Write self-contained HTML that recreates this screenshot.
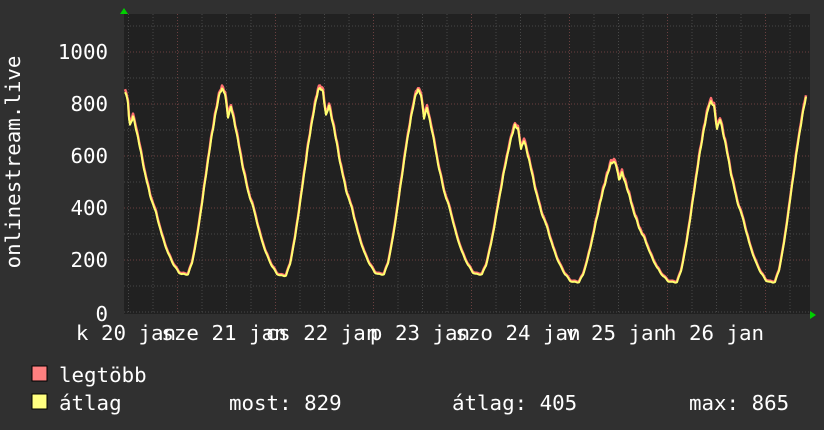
<!DOCTYPE html>
<html><head><meta charset="utf-8"><style>
html,body{margin:0;padding:0;background:#303030;}
svg{display:block}
text{font-family:"DejaVu Sans Mono","Liberation Mono",monospace;fill:#fff;font-size:20.8px}
</style></head><body>
<svg id="g" width="824" height="430" viewBox="0 0 824 430" xmlns="http://www.w3.org/2000/svg">
<rect width="824" height="430" fill="#303030"/>
<rect x="124" y="14" width="686" height="300" fill="#212121"/>
<g id="grid"></g>
<path id="red" fill="none" stroke="#ff7070" stroke-width="2.5" stroke-linejoin="round"/>
<path id="yel" fill="none" stroke="#ffff70" stroke-width="2" stroke-linejoin="round"/>
<polygon points="120,14 124,8 128,14" fill="#00d000"/>
<polygon points="810,311 816,315 810,319" fill="#00d000"/>
<g text-anchor="end">
<text x="108" y="59">1000</text>
<text x="108" y="111">800</text>
<text x="108" y="163">600</text>
<text x="108" y="215">400</text>
<text x="108" y="267">200</text>
<text x="108" y="321">0</text>
</g>
<text transform="translate(20,162) rotate(-90)" text-anchor="middle">onlinestream.live</text>
<g text-anchor="middle">
<text x="126" y="340">k 20 jan</text>
<text x="224" y="340">sze 21 jan</text>
<text x="322" y="340">cs 22 jan</text>
<text x="420" y="340">p 23 jan</text>
<text x="518" y="340">szo 24 jan</text>
<text x="616" y="340">v 25 jan</text>
<text x="714" y="340">h 26 jan</text>
</g>
<rect x="32" y="366" width="15" height="15" fill="#ff8080" stroke="#000" stroke-width="1"/>
<rect x="32" y="394" width="15" height="15" fill="#ffff80" stroke="#000" stroke-width="1"/>
<text x="59" y="382">legtöbb</text>
<text x="59" y="410">átlag</text>
<text x="229" y="410">most: 829</text>
<text x="452" y="410">átlag: 405</text>
<text x="689" y="410">max: 865</text>
</svg>
<script>
var g=document.getElementById('grid'),s="";
for(var v=0;v<=1100;v+=100){var y=312-v*0.26;s+='<line x1="124" x2="810" y1="'+y+'" y2="'+y+'" stroke="'+(v%200==0&&v>0?'#6a4040':'#484848')+'" stroke-dasharray="1,2"/>';}
for(var x=128.5;x<810;x+=24.5){var maj=Math.abs(((x-177)/98)-Math.round((x-177)/98))<0.05;s+='<line x1="'+x+'" x2="'+x+'" y1="14" y2="314" stroke="'+(maj?'#6a4040':'#484848')+'" stroke-dasharray="1,2"/>';}
g.innerHTML=s;
var kf=[[0,1],[3,.97],[6,.85],[9,.9],[14,.78],[20,.6],[26,.45],[32,.35],[38,.22],[44,.12],[50,.05],[55,.01],[58,0],[64,0],[68,.06],[73,.2],[79,.42],[85,.65],[91,.85],[96,.98],[98,1]];
var peaks=[[124,820],[222,860],[320,865],[418,855],[515,720],[613,580],[711,810],[809,860]];
var tr=[145,140,145,145,115,115,115];
function f(d){for(var i=1;i<kf.length;i++){if(d<=kf[i][0]){var a=kf[i-1],b=kf[i];return a[1]+(b[1]-a[1])*(d-a[0])/(b[0]-a[0]);}}return 1;}
var py="",pr="";
for(var x=125;x<=806;x++){
 var k=0;while(k<peaks.length-2&&x>=peaks[k+1][0])k++;
 var d=x-peaks[k][0],fr=f(d),m=tr[k],M=d<58?peaks[k][1]:peaks[k+1][1];
 var v=m+(M-m)*fr;
 if(x<129)v=850-(x-125)*15;
 v+=Math.sin(x*1.7)*4*fr+Math.sin(x*0.9)*2;
 var y=312-v*0.26, yr=y-1-Math.abs(Math.sin(x*2.3))*2*fr;
 py+=(x==125?"M":"L")+x+","+y.toFixed(1);pr+=(x==125?"M":"L")+x+","+yr.toFixed(1);
}
document.getElementById('yel').setAttribute('d',py);document.getElementById('red').setAttribute('d',pr);
</script>
</body></html>
